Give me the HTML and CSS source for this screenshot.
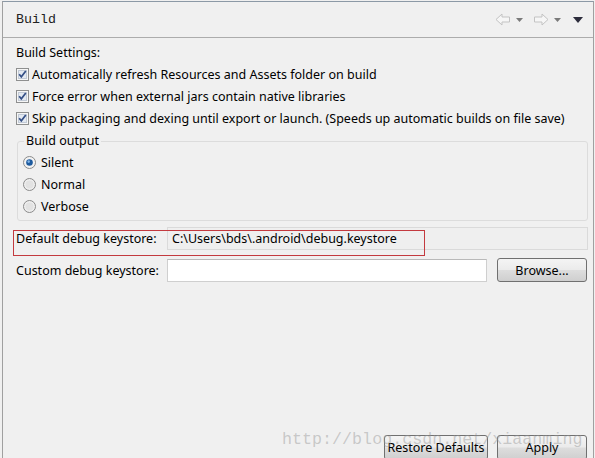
FILE: index.html
```html
<!DOCTYPE html>
<html>
<head>
<meta charset="utf-8">
<title>Build</title>
<link rel="stylesheet" href="styles.css">
</head>
<body>
<div class="pane">
    <div class="head">
        <span class="title">Build</span>
        <div class="nav">
            <svg class="arrow" width="16" height="13" viewBox="0 0 16 13"><path d="M1 6.5L7 1v3h7.5v5H7v3z" fill="#f6f6f6" stroke="#c3c3c3"/></svg>
            <svg class="drop" width="7" height="4" viewBox="0 0 7 4"><path d="M0 0h7L3.5 4z" fill="#7a7a7a"/></svg>
            <svg class="arrow" width="16" height="13" viewBox="0 0 16 13"><path d="M15 6.5L9 1v3H1.5v5H9v3z" fill="#f6f6f6" stroke="#c3c3c3"/></svg>
            <svg class="drop" width="7" height="4" viewBox="0 0 7 4"><path d="M0 0h7L3.5 4z" fill="#7a7a7a"/></svg>
            <svg class="drop-big" width="10" height="6" viewBox="0 0 10 6"><path d="M0 0h10L5 6z" fill="#2c2c3c"/></svg>
        </div>
    </div>

    <div class="body">
        <div class="line">Build Settings:</div>
        <label class="line check">
            <svg class="cb" width="13" height="13" viewBox="0 0 13 13"><rect x="0.5" y="0.5" width="12" height="12" fill="#f6f6f6" stroke="#8e8f8f"/><rect x="2.5" y="2.5" width="8" height="8" fill="#e3e9f1" stroke="#c2cad6"/><path d="M3.2 6.2l2.1 2.6L9.8 3" fill="none" stroke="#344f86" stroke-width="1.7"/></svg>
            Automatically refresh Resources and Assets folder on build
        </label>
        <label class="line check">
            <svg class="cb" width="13" height="13" viewBox="0 0 13 13"><rect x="0.5" y="0.5" width="12" height="12" fill="#f6f6f6" stroke="#8e8f8f"/><rect x="2.5" y="2.5" width="8" height="8" fill="#e3e9f1" stroke="#c2cad6"/><path d="M3.2 6.2l2.1 2.6L9.8 3" fill="none" stroke="#344f86" stroke-width="1.7"/></svg>
            Force error when external jars contain native libraries
        </label>
        <label class="line check">
            <svg class="cb" width="13" height="13" viewBox="0 0 13 13"><rect x="0.5" y="0.5" width="12" height="12" fill="#f6f6f6" stroke="#8e8f8f"/><rect x="2.5" y="2.5" width="8" height="8" fill="#e3e9f1" stroke="#c2cad6"/><path d="M3.2 6.2l2.1 2.6L9.8 3" fill="none" stroke="#344f86" stroke-width="1.7"/></svg>
            Skip packaging and dexing until export or launch. (Speeds up automatic builds on file save)
        </label>

        <fieldset class="group">
            <legend>Build output</legend>
            <label class="line check">
                <svg class="rb" width="13" height="13" viewBox="0 0 13 13"><circle cx="6.5" cy="6.5" r="6" fill="#f2f2f2" stroke="#8a8a8a"/><circle cx="6.5" cy="6.5" r="3.3" fill="#1d5a9e"/><circle cx="5.7" cy="5.6" r="1.3" fill="#7fb3e6"/></svg>
                Silent
            </label>
            <label class="line check">
                <svg class="rb" width="13" height="13" viewBox="0 0 13 13"><circle cx="6.5" cy="6.5" r="6" fill="#eeeeee" stroke="#8a8a8a"/><circle cx="6.5" cy="6.5" r="4" fill="#e2e2e2"/></svg>
                Normal
            </label>
            <label class="line check">
                <svg class="rb" width="13" height="13" viewBox="0 0 13 13"><circle cx="6.5" cy="6.5" r="6" fill="#eeeeee" stroke="#8a8a8a"/><circle cx="6.5" cy="6.5" r="4" fill="#e2e2e2"/></svg>
                Verbose
            </label>
        </fieldset>

        <div class="row">
            <span class="row-label">Default debug keystore:</span>
            <div class="field readonly">C:\Users\bds\.android\debug.keystore</div>
        </div>
        <div class="row custom">
            <span class="row-label">Custom debug keystore:</span>
            <div class="field input"></div>
            <button class="btn browse">Browse...</button>
        </div>
    </div>

    <div class="foot">
        <button class="btn restore">Restore Defaults</button>
        <button class="btn apply">Apply</button>
    </div>

    <div class="mark-box"></div>
    <div class="watermark">http://blog.csdn.net/xiaanming</div>
</div>
</body>
</html>
```

FILE: styles.css
```css
html, body{
    margin:0;
    padding:0;
    background:#f0f0f0;
}
body{
    padding-top:1px;
    font-family:"Noto Sans", "Liberation Sans", sans-serif;
    font-size:12.5px;
    color:#000;
}
.pane{
    position:relative;
    margin-left:2px;
    width:592px;
    height:457px;
    box-sizing:border-box;
    border-top:1px solid #8c99a6;
    border-left:1px solid #a0a0a0;
    border-right:1px solid #a0a0a0;
    display:flex;
    flex-direction:column;
    overflow:hidden;
}
.head{
    height:35px;
    border-bottom:1px solid #acacac;
    display:flex;
    align-items:center;
    padding:0 10px 0 13px;
}
.title{
    font-family:"Liberation Mono", monospace;
    font-size:13.3px;
    color:#222;
}
.nav{
    margin-left:auto;
    display:flex;
    align-items:center;
    gap:5px;
}
.nav .drop{ margin-right:5px; }
.nav .drop-big{ margin-left:2px; }

.body{
    padding:3px 5px 0 13px;
}
.line{
    display:flex;
    align-items:center;
    height:22px;
    white-space:nowrap;
}
.check .cb, .check .rb{
    flex:none;
    margin-right:3px;
}
.check .rb{ margin-right:5px; }

.group{
    margin:4px 0 0 1px;
    padding:2px 0 3px 5px;
    border:1px solid #dcdcdc;
    border-radius:3px;
}
.group legend{
    margin-left:1px;
    padding:0 2px;
    line-height:16px;
}

.row{
    display:flex;
    align-items:center;
    margin-top:6px;
    height:23px;
}
.row.custom{
    margin-top:8px;
    height:24px;
}
.row-label{
    width:151px;
    flex:none;
}
.field{
    box-sizing:border-box;
    height:23px;
    display:flex;
    align-items:center;
    padding-left:4px;
}
.field.readonly{
    flex:1;
    border:1px solid #dadada;
    background:#efefef;
}
.field.input{
    width:320px;
    height:23px;
    border:1px solid #cfcfcf;
    border-top-color:#b9b9b9;
    background:#fff;
}

.btn{
    box-sizing:border-box;
    height:25px;
    border:1px solid #707070;
    border-radius:3px;
    background:linear-gradient(#f4f4f4 0%, #ebebeb 48%, #dddddd 52%, #cfcfcf 100%);
    font-family:inherit;
    font-size:12.5px;
    color:#000;
    padding:0;
}
.browse{
    width:90px;
    height:24px;
    margin-left:10px;
}

.foot{
    margin-top:auto;
    height:23px;
    display:flex;
    justify-content:flex-end;
    align-items:flex-start;
    gap:9px;
    padding-right:6px;
}
.restore{ width:104px; flex:none; }
.apply{ width:90px; flex:none; }

.mark-box{
    position:absolute;
    left:10px;
    top:228px;
    width:412px;
    height:26px;
    box-sizing:border-box;
    border:1px solid #c33a3f;
}
.watermark{
    position:absolute;
    left:279px;
    top:428px;
    font-family:"Liberation Mono", monospace;
    font-size:16.7px;
    color:rgba(150,150,150,0.45);
    white-space:nowrap;
    pointer-events:none;
}
```
